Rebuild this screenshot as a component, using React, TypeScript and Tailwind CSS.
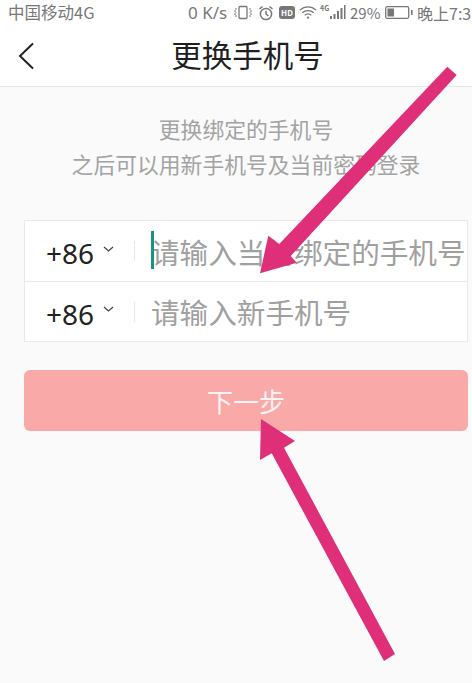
import React from 'react';

const cjk = { fontFamily: '"Noto Sans CJK SC", "Noto Sans", sans-serif' };

function StatusIcons() {
  return (
    <>
      {/* vibrate */}
      <svg className="ml-[6px]" width="20" height="15" viewBox="0 0 20 15" fill="none" stroke="#777" strokeWidth="1.300">
        <rect x="6" y="1.500" width="8" height="12" rx="1" />
        <path d="M3 3v1.500L1.500 6 3 7.500 1.500 9 3 10.500V12M17 3v1.500L18.500 6 17 7.500 18.500 9 17 10.500V12" strokeWidth="1" />
      </svg>
      {/* alarm */}
      <svg className="ml-[5px]" width="16" height="16" viewBox="0 0 16 16" fill="none" stroke="#777" strokeWidth="1.500">
        <circle cx="8" cy="9" r="5.600" />
        <path d="M8 5.800V9l2.400 2M1.500 4 4.500 1.500M14.500 4l-3-2.500" />
      </svg>
      {/* hd */}
      <div className="ml-[5px] w-[16px] h-[13px] rounded-[3px] bg-[#777] flex items-center justify-center text-[8px] leading-none font-bold text-white">HD</div>
      {/* wifi */}
      <svg className="ml-[4px]" width="18" height="15" viewBox="0 0 19 15" fill="none" stroke="#777" strokeWidth="1.400">
        <path d="M1 5c5-4.500 12-4.500 17 0M3.500 7.800c3.500-3 8.500-3 12 0M6 10.400c2-1.700 5-1.700 7 0" />
        <circle cx="9.500" cy="13" r="1.200" fill="#777" stroke="none" />
      </svg>
      {/* signal */}
      <div className="ml-[3px] w-[27px] h-[15px] flex items-end justify-between">
        <span className="text-[7px] leading-none font-bold text-[#777] self-start">4G</span>
        <svg width="17" height="15" viewBox="0 0 17 15" fill="#777">
          <rect x="0" y="11" width="2" height="3" />
          <rect x="3.500" y="9" width="2" height="5" />
          <rect x="7" y="6" width="2" height="8" />
          <rect x="10.500" y="3" width="2" height="11" />
          <rect x="14" y="0" width="1.500" height="14" />
        </svg>
      </div>
      <span className="ml-[3px] w-[30px] text-[15px] leading-none text-[#777]">29%</span>
      {/* battery */}
      <svg className="ml-[5px]" width="28" height="13" viewBox="0 0 28 13" fill="none">
        <rect x="0.700" y="0.700" width="23" height="11.600" rx="1.500" stroke="#777" strokeWidth="1.300" />
        <rect x="2.500" y="2.500" width="6.500" height="8" fill="#777" />
        <rect x="26" y="4" width="1.600" height="5" fill="#777" />
      </svg>
    </>
  );
}

function Row({ placeholder, caret, first }: { placeholder: string; caret?: boolean; first?: boolean }) {
  return (
    <div className={first ? 'h-[61px] flex items-center border-b border-[#e9e9e9]' : 'h-[59px] flex items-center'}>
      <span className="ml-[21px] mt-[4px] w-[48px] text-[28px] leading-none text-[#222]" style={{ fontFamily: '"Noto Sans", sans-serif' }}>+86</span>
      <svg className="ml-[9px] -mt-[4px]" width="11" height="7" viewBox="0 0 11 7" fill="none" stroke="#444" strokeWidth="1.300">
        <path d="M1 1l4.500 4L10 1" />
      </svg>
      <div className="ml-[20px] w-px h-[20px] bg-[#e6e6e6]" />
      <div className="ml-[16px] relative whitespace-nowrap">
        {caret && <div className="absolute left-0 -top-[5px] w-[3px] h-[38px] bg-[#17937f]" />}
        <div className="mt-[2px] text-[28.600px] leading-none text-[#a0a0a0]">{placeholder}</div>
      </div>
    </div>
  );
}

export default function App() {
  return (
    <div className="relative w-[472px] h-[683px] overflow-hidden bg-[#fafafa] flex flex-col" style={cjk}>
      {/* Status bar */}
      <div className="h-[25px] bg-white flex items-center whitespace-nowrap text-[#777]">
        <span className="ml-[8px] w-[180px] text-[16.500px] leading-none">中国移动4G</span>
        <span className="w-[39px] text-[17px] leading-none" style={{ fontFamily: '"Noto Sans", sans-serif' }}>0 K/s</span>
        <StatusIcons />
        <span className="ml-[4px] text-[16px] leading-none">晚上7:3</span>
      </div>

      {/* Header */}
      <header className="h-[62px] bg-white border-b border-[#e8e8e8] flex items-center relative">
        <svg className="ml-[18px]" width="16" height="28" viewBox="0 0 16 28" fill="none" stroke="#222" strokeWidth="2">
          <path d="M15 1.500 2 14l13 12.500" />
        </svg>
        <h1 className="absolute left-0 right-0 -mt-[2px] text-center text-[30.500px] leading-none font-normal text-[#1f1f1f] pl-[23px]">更换手机号</h1>
      </header>

      {/* Hint */}
      <div className="mt-[31px] pl-[20px] flex flex-col items-center gap-[13px] text-[21.800px] leading-[22px] text-[#a3a3a3]">
        <p>更换绑定的手机号</p>
        <p>之后可以用新手机号及当前密码登录</p>
      </div>

      {/* Form */}
      <div className="mt-[45px] ml-[24px] mr-[4px] bg-white border border-[#e9e9e9]">
        <Row placeholder="请输入当前绑定的手机号" caret first />
        <Row placeholder="请输入新手机号" />
      </div>

      <button className="mt-[28px] ml-[24px] mr-[4px] h-[61px] rounded-[6px] bg-[#faa9a9] text-[26px] leading-none text-[#fff4f4]">
        下一步
      </button>

      {/* Annotation arrows */}
      <svg className="absolute inset-0 pointer-events-none" width="472" height="683" viewBox="0 0 472 683" fill="#de2f78">
        <polygon points="447.300,66.700 456.700,75 290.700,256 296.700,262.700 260,273.300 268.300,235.700 279.300,244" />
        <polygon points="261,419 295,441 284,447.700 395,654 384,661 271.700,453.300 260,460" />
      </svg>
    </div>
  );
}
